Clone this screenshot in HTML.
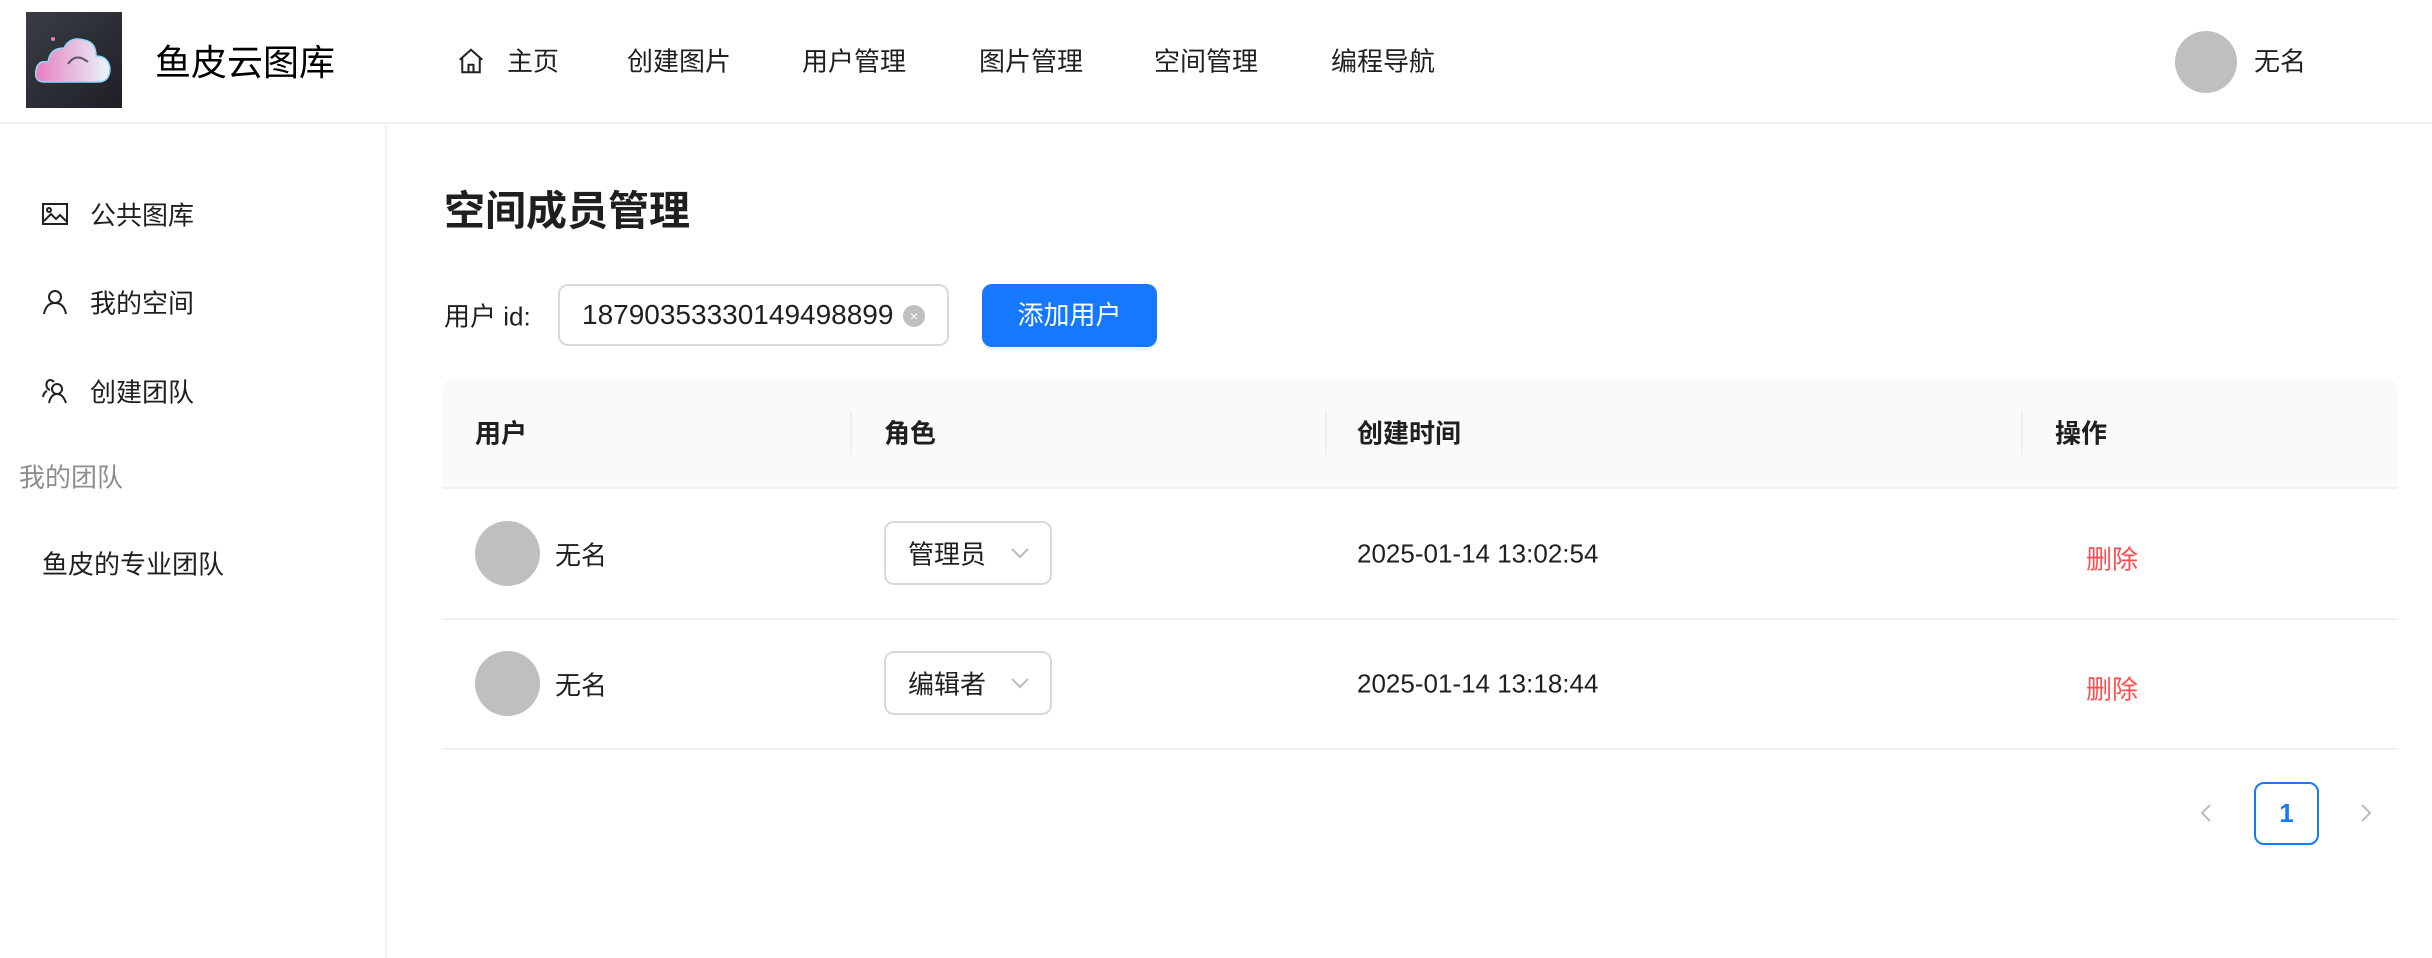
<!DOCTYPE html>
<html><head><meta charset="utf-8"><style>
*{margin:0;padding:0;box-sizing:border-box}
body{width:2432px;height:958px;background:#fff;font-family:"Liberation Sans","Noto Sans CJK SC",sans-serif;color:rgba(0,0,0,0.88);position:relative;overflow:hidden;font-size:26px}
.a{position:absolute;white-space:nowrap}
.vc{transform:translateY(-50%)}
</style></head><body>
<div class="a" style="left:0;top:0;width:2432px;height:124px;border-bottom:2px solid #f0f0f0"></div>
<div class="a" style="left:26px;top:12px;width:96px;height:96px;background:linear-gradient(135deg,#3a3d44,#1e2026)">
<svg width="96" height="96" viewBox="0 0 96 96"><defs><linearGradient id="g" x1="0" x2="1"><stop offset="0" stop-color="#e87fc0"/><stop offset="1" stop-color="#e8f6fa"/></linearGradient></defs>
<path d="M18 70 Q8 70 10 58 Q12 48 22 50 Q24 36 38 36 Q44 24 58 28 Q70 30 70 44 Q82 44 84 56 Q84 70 72 70 Z" fill="url(#g)" stroke="#8fd8ff" stroke-width="1.5"/>
<path d="M42 52 Q50 40 62 50" stroke="#556" stroke-width="2" fill="none"/><circle cx="27" cy="27" r="2" fill="#e87fc0"/></svg></div>
<div class="a vc" style="left:155px;top:60px;font-size:36px;color:#000">鱼皮云图库</div>
<svg class="a" style="left:456px;top:46px" width="30" height="30" viewBox="0 0 24 24" fill="none" stroke="#222" stroke-width="1.6"><path d="M3 11 L12 3 L21 11 M5 9 V21 H19 V9 M10 21 V15 H14 V21"/></svg>
<div class="a vc" style="left:507px;top:60px">主页</div>
<div class="a vc" style="left:627px;top:60px">创建图片</div>
<div class="a vc" style="left:802px;top:60px">用户管理</div>
<div class="a vc" style="left:979px;top:60px">图片管理</div>
<div class="a vc" style="left:1154px;top:60px">空间管理</div>
<div class="a vc" style="left:1331px;top:60px">编程导航</div>
<div class="a" style="left:2175px;top:31px;width:62px;height:62px;border-radius:50%;background:#bfbfbf"></div>
<div class="a vc" style="left:2254px;top:60px">无名</div>

<div class="a" style="left:385px;top:125px;width:2px;height:833px;background:#f0f0f0"></div>
<svg class="a" style="left:41px;top:201px" width="28" height="26" viewBox="0 0 28 26" fill="none" stroke="#222" stroke-width="2"><rect x="2" y="3" width="24" height="20"/><circle cx="8" cy="9" r="2"/><path d="M3 20 L10 13 L15 18 L19 14 L25 20"/></svg>
<div class="a vc" style="left:90px;top:214px">公共图库</div>
<svg class="a" style="left:42px;top:288px" width="26" height="28" viewBox="0 0 26 28" fill="none" stroke="#222" stroke-width="2"><circle cx="13" cy="9" r="6"/><path d="M2 26 Q4 15 13 15 Q22 15 24 26"/></svg>
<div class="a vc" style="left:90px;top:302px">我的空间</div>
<svg class="a" style="left:41px;top:377px" width="28" height="28" viewBox="0 0 28 28" fill="none" stroke="#222" stroke-width="2"><circle cx="16" cy="12" r="5"/><path d="M8 26 Q10 17 16 17 Q22 17 25 26 M9 13 Q4 11 6 5 Q9 1 13 5 M2 20 Q3 15 6 14"/></svg>
<div class="a vc" style="left:90px;top:391px">创建团队</div>
<div class="a vc" style="left:19px;top:476px;color:rgba(0,0,0,0.45)">我的团队</div>
<div class="a vc" style="left:42px;top:563px">鱼皮的专业团队</div>

<div class="a vc" style="left:444px;top:207px;font-size:41px;font-weight:bold">空间成员管理</div>
<div class="a vc" style="left:444px;top:315px">用户 id:</div>
<div class="a" style="left:558px;top:284px;width:391px;height:62px;border:2px solid #d9d9d9;border-radius:10px;overflow:hidden"><div class="a vc" style="left:22px;top:29px;width:317px;overflow:hidden;font-size:28px">18790353330149498899</div>
<div class="a" style="left:343px;top:19px;width:22px;height:22px;border-radius:50%;background:#bfbfbf;color:#fff;font-size:14px;text-align:center;line-height:22px">×</div></div>
<div class="a" style="left:982px;top:284px;width:175px;height:63px;background:#1677ff;border-radius:10px;color:#fff;text-align:center;line-height:63px;box-shadow:0 3px 0 rgba(5,145,255,0.1)">添加用户</div>

<div class="a" style="left:442px;top:378px;width:1956px;height:111px;background:#fafafa;border-radius:14px 14px 0 0;border-bottom:2px solid #f0f0f0"></div>
<div class="a vc" style="left:475px;top:432px;font-weight:bold">用户</div>
<div class="a vc" style="left:884px;top:432px;font-weight:bold">角色</div>
<div class="a vc" style="left:1357px;top:432px;font-weight:bold">创建时间</div>
<div class="a vc" style="left:2055px;top:432px;font-weight:bold">操作</div>
<div class="a" style="left:850px;top:411px;width:2px;height:44px;background:#f0f0f0"></div>
<div class="a" style="left:1325px;top:411px;width:2px;height:44px;background:#f0f0f0"></div>
<div class="a" style="left:2021px;top:411px;width:2px;height:44px;background:#f0f0f0"></div>

<div class="a" style="left:442px;top:618px;width:1956px;height:2px;background:#f0f0f0"></div>
<div class="a" style="left:442px;top:748px;width:1956px;height:2px;background:#f0f0f0"></div>

<div class="a" style="left:475px;top:521px;width:65px;height:65px;border-radius:50%;background:#bfbfbf"></div>
<div class="a vc" style="left:555px;top:554px">无名</div>
<div class="a" style="left:884px;top:521px;width:168px;height:64px;border:2px solid #d9d9d9;border-radius:10px"><div class="a vc" style="left:22px;top:30px">管理员</div><svg class="a" style="left:124px;top:22px" width="20" height="16" viewBox="0 0 20 16" fill="none" stroke="#bbb" stroke-width="2"><path d="M2 4 L10 12 L18 4"/></svg></div>
<div class="a vc" style="left:1357px;top:554px">2025-01-14 13:02:54</div>
<div class="a vc" style="left:2086px;top:558px;color:#ff4d4f">删除</div>

<div class="a" style="left:475px;top:651px;width:65px;height:65px;border-radius:50%;background:#bfbfbf"></div>
<div class="a vc" style="left:555px;top:684px">无名</div>
<div class="a" style="left:884px;top:651px;width:168px;height:64px;border:2px solid #d9d9d9;border-radius:10px"><div class="a vc" style="left:22px;top:30px">编辑者</div><svg class="a" style="left:124px;top:22px" width="20" height="16" viewBox="0 0 20 16" fill="none" stroke="#bbb" stroke-width="2"><path d="M2 4 L10 12 L18 4"/></svg></div>
<div class="a vc" style="left:1357px;top:684px">2025-01-14 13:18:44</div>
<div class="a vc" style="left:2086px;top:688px;color:#ff4d4f">删除</div>

<svg class="a" style="left:2198px;top:802px" width="16" height="22" viewBox="0 0 16 22" fill="none" stroke="#bbb" stroke-width="2"><path d="M12 3 L4 11 L12 19"/></svg>
<div class="a" style="left:2254px;top:782px;width:65px;height:63px;border:2px solid #1677ff;border-radius:10px;color:#1677ff;font-weight:bold;text-align:center;line-height:59px">1</div>
<svg class="a" style="left:2358px;top:802px" width="16" height="22" viewBox="0 0 16 22" fill="none" stroke="#bbb" stroke-width="2"><path d="M4 3 L12 11 L4 19"/></svg>
</body></html>
